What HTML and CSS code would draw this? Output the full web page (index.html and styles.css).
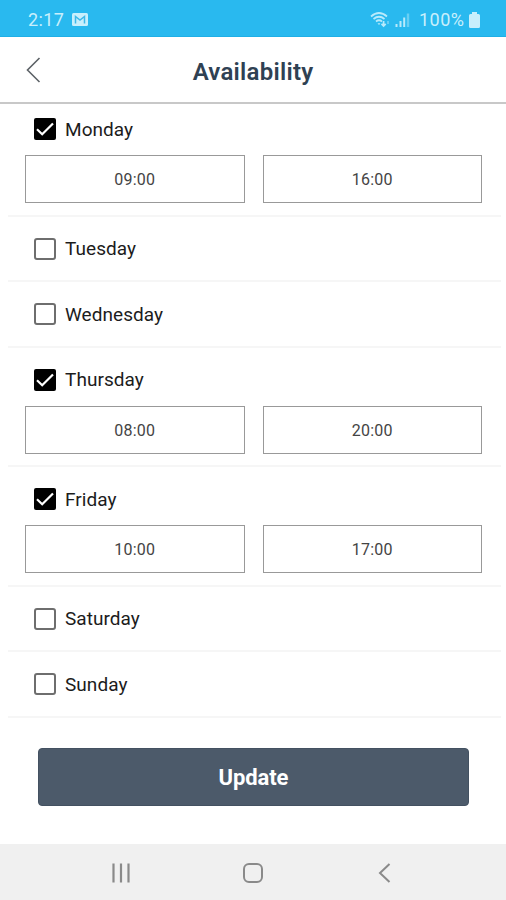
FILE: index.html
```html
<!DOCTYPE html>
<html lang="en">
<head>
<meta charset="utf-8">
<title>Availability</title>
<link rel="stylesheet" href="styles.css">
</head>
<body>
<div class="status">
  <span class="clock">2:17</span>
  <svg class="mail" width="16" height="13" viewBox="0 0 16 13"><rect width="16" height="13" rx="1.5" fill="#c9effc"/><path d="M3.5 10.5V3.5L8 7L12.5 3.5V10.5" fill="none" stroke="#3eb9e9" stroke-width="1.5"/></svg>
  <svg class="signal" width="40" height="17" viewBox="0 0 40 17" fill="none" stroke="#b9eafb" stroke-width="1.7"><path d="M1 5.5Q9 -1.5 17 5.5M3.5 8Q9 3.5 14.5 8M6 10.5Q9 8 12 10.5"/><path d="M7.5 12.2H10.5L9 14Z" fill="#b9eafb" stroke="none"/><path d="M13.6 10V15M11.5 12.8L13.6 15L15.7 12.8"/><path d="M18 10V13" opacity=".5"/><path d="M26.5 13V16M30.5 10V16M34.2 6.5V16" stroke-width="2"/><path d="M38 2.5V16" stroke-width="2.4" opacity=".45"/></svg>
  <span class="percent">100%</span>
  <svg class="battery" width="11" height="16" viewBox="0 0 11 16"><path d="M3 0H8V2H9.5Q11 2 11 3.5V14.5Q11 16 9.5 16H1.5Q0 16 0 14.5V3.5Q0 2 1.5 2H3Z" fill="#c9effc"/></svg>
</div>
<header class="header">
  <svg class="back" width="16" height="26" viewBox="0 0 16 26"><path d="M14.5 1L2.5 13L14.5 25" fill="none" stroke="#5d6267" stroke-width="1.6"/></svg>
  <h1 class="title">Availability</h1>
</header>
<main class="days">
  <section class="day open first">
    <div class="label"><svg class="check" viewBox="0 0 22 22"><rect width="22" height="22" rx="2" fill="#000"/><path d="M3 11.3L8.2 16.3L19 5.5" fill="none" stroke="#fff" stroke-width="2.2"/></svg><span>Monday</span></div>
    <div class="times"><div class="time">09:00</div><div class="time">16:00</div></div>
  </section>
  <section class="day"><div class="label"><span class="check empty"></span><span>Tuesday</span></div></section>
  <section class="day"><div class="label"><span class="check empty"></span><span>Wednesday</span></div></section>
  <section class="day open">
    <div class="label"><svg class="check" viewBox="0 0 22 22"><rect width="22" height="22" rx="2" fill="#000"/><path d="M3 11.3L8.2 16.3L19 5.5" fill="none" stroke="#fff" stroke-width="2.2"/></svg><span>Thursday</span></div>
    <div class="times"><div class="time">08:00</div><div class="time">20:00</div></div>
  </section>
  <section class="day open">
    <div class="label"><svg class="check" viewBox="0 0 22 22"><rect width="22" height="22" rx="2" fill="#000"/><path d="M3 11.3L8.2 16.3L19 5.5" fill="none" stroke="#fff" stroke-width="2.2"/></svg><span>Friday</span></div>
    <div class="times"><div class="time">10:00</div><div class="time">17:00</div></div>
  </section>
  <section class="day"><div class="label"><span class="check empty"></span><span>Saturday</span></div></section>
  <section class="day"><div class="label"><span class="check empty"></span><span>Sunday</span></div></section>
  <button class="update">Update</button>
</main>
<nav class="nav">
  <svg width="20" height="20" viewBox="0 0 20 20"><path d="M2.5 .5V19.5M10 .5V19.5M17.5 .5V19.5" stroke="#8a8a8a" stroke-width="2.2"/></svg>
  <svg width="20" height="20" viewBox="0 0 20 20"><rect x="1" y="1" width="18" height="18" rx="5" fill="none" stroke="#8a8a8a" stroke-width="2"/></svg>
  <svg width="20" height="20" viewBox="0 0 20 20"><path d="M14.5 1L5 10L14.5 19" fill="none" stroke="#8a8a8a" stroke-width="2"/></svg>
</nav>
</body>
</html>
```
FILE: styles.css
```css
* { box-sizing: border-box; }
body {
  margin: 0;
  height: 900px;
  display: flex;
  flex-direction: column;
  overflow: hidden;
  background: #fff;
  font-family: Roboto, sans-serif;
  color: #1c1c1c;
}
.status {
  height: 37px;
  flex: none;
  display: flex;
  align-items: center;
  padding: 3px 26px 0 28px;
  background: #29b9ef;
  border-bottom: 1px solid #1fafe6;
  color: #c9effc;
  font-size: 18px;
}
.clock { width: 44px; letter-spacing: .4px; }
.signal { margin-left: auto; }
.percent { width: 46px; margin: 0 4px 0 9px; letter-spacing: .5px; }
.header {
  height: 67px;
  flex: none;
  display: grid;
  grid-template-columns: 60px 1fr 60px;
  align-items: center;
  border-bottom: 2px solid #c8c8c8;
}
.back { margin-left: 25px; margin-top: 1px; }
.title {
  margin: 4px 0 0;
  text-align: center;
  font-size: 24px;
  font-weight: 600;
  letter-spacing: .25px;
  color: #2f4153;
}
.days { flex: 1; display: flex; flex-direction: column; }
.day {
  flex: none;
  height: 65.6px;
  margin: 0 5px 0 8px;
  padding: 21px 19px 0 17px;
  border-bottom: 2px solid #f6f6f6;
}
.open { height: 119.5px; }
.first { height: 112.5px; padding-top: 14px; }
.label {
  display: flex;
  align-items: center;
  gap: 9px;
  height: 22px;
  padding-left: 9px;
  font-size: 19px;
  letter-spacing: .05px;
}
.check { width: 22px; height: 22px; flex: none; }
.empty { border: 2px solid #6e6e6e; border-radius: 3px; }
.times { display: flex; gap: 18px; margin-top: 15px; }
.time {
  flex: 1;
  height: 48px;
  display: flex;
  align-items: center;
  justify-content: center;
  border: 1.5px solid #999;
  font-size: 16px;
  letter-spacing: .2px;
  color: #444;
  padding-top: 1px;
}
.update {
  flex: none;
  height: 58px;
  margin: 30px 37px 0 38px;
  padding: 2px 0 0;
  border: 1px solid #435161;
  border-radius: 4px;
  background: #4c5a6a;
  color: #fff;
  font: 700 22px Roboto, sans-serif;
  letter-spacing: -.1px;
}
.nav {
  height: 56px;
  flex: none;
  display: flex;
  justify-content: space-between;
  align-items: center;
  padding: 2px 111px 0;
  background: #f0f0f0;
}
```
